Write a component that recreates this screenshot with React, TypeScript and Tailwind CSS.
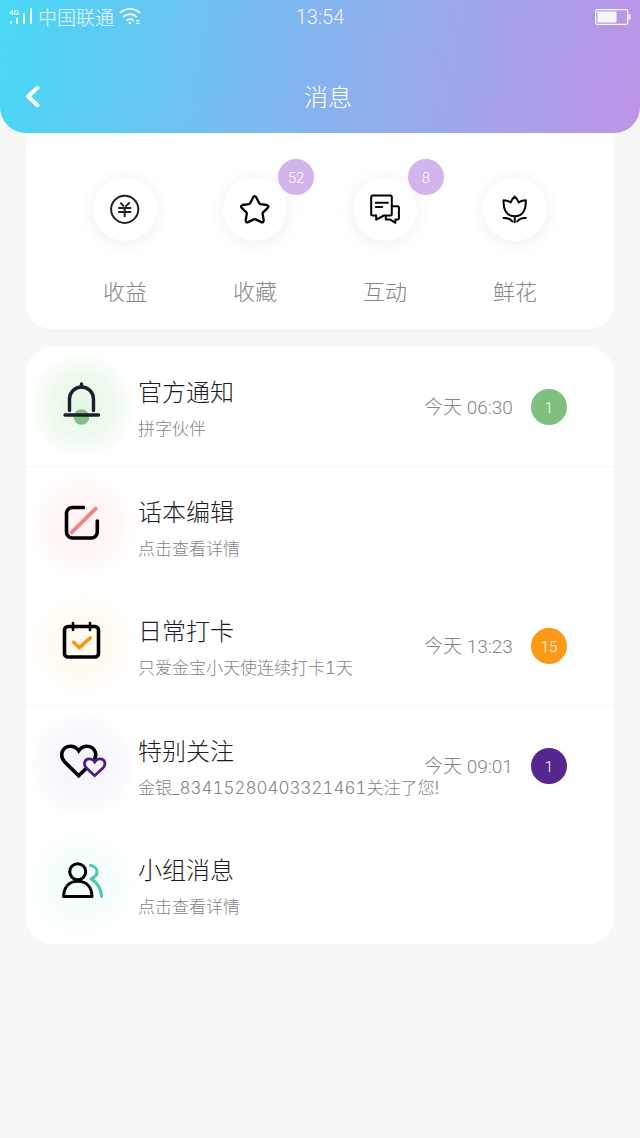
import React from 'react';

interface Shortcut {
  label: string;
  count?: number;
  icon: React.ReactNode;
}

interface Message {
  title: string;
  text: string;
  time?: string;
  count?: number;
  badge?: string;
  glow: string;
  divider?: boolean;
  icon: React.ReactNode;
}

const YenIcon = () => (
  <svg viewBox="0 0 32 32" className="size-8" fill="none" stroke="#222" strokeWidth="2">
    <circle cx="15.7" cy="16.3" r="13.6" />
    <path d="M9.2 15h13M9.2 19h13M15.7 14v10M11.4 9.6l3.4 3.8M20.8 9.4l-4.6 4.4" />
  </svg>
);

const StarIcon = () => (
  <svg viewBox="0 0 32 32" className="size-8" fill="none" stroke="#000" strokeWidth="2.3" strokeLinejoin="round">
    <path d="M14.2 4.2Q15.7 1.9 17.2 4.2L20.2 10.2Q20.7 11 21.7 11.2L27.8 12Q30.4 12.7 28.7 14.9L24.1 19.3Q23.5 20 23.6 20.8L24.7 27.2Q24.7 30.3 21.8 28.9L16.6 26.4Q15.7 26 14.8 26.4L9.6 28.9Q6.7 30.3 6.7 27.2L7.8 20.8Q7.9 20 7.3 19.3L2.7 14.9Q1 12.7 3.6 12L9.7 11.2Q10.7 11 11.2 10.2Z" />
  </svg>
);

const ChatIcon = () => (
  <svg viewBox="0 0 32 32" className="size-8" fill="none" stroke="#000" strokeWidth="2" strokeLinejoin="round" strokeLinecap="round">
    <path d="M3.5 2.5h18a1.3 1.3 0 0 1 1.3 1.3v17.4a1.3 1.3 0 0 1-1.3 1.3H15l-7.8 4.2v-4.2H3.5a1.3 1.3 0 0 1-1.3-1.3V3.8a1.3 1.3 0 0 1 1.3-1.3z" />
    <path d="M6.8 9.7h12M6.8 14h6.4" />
    <path d="M23 13.2h5.6a1.3 1.3 0 0 1 1.3 1.3v10.8a1.3 1.3 0 0 1-1.3 1.3h-2.2v3.2l-5.6-3.4h-4v-3.2" />
  </svg>
);

const FlowerIcon = () => (
  <svg viewBox="0 0 32 32" className="size-8" fill="none" stroke="#000" strokeWidth="2" strokeLinejoin="round" strokeLinecap="round">
    <path d="M15.7 3.6c-1.8 1.4-3 3.2-4 5.8-2-1.4-4.4-2.2-7-2.2-.8 8.6 2.6 16 11 16s11.8-7.4 11-16c-2.6 0-5 .8-7 2.2-1-2.6-2.2-4.4-4-5.8z" />
    <path d="M15.7 23.5v5.8M4.6 25c3.6-.3 6.6.8 8.6 3.4M26.8 25c-3.6-.3-6.6.8-8.6 3.4" />
  </svg>
);

const BellIcon = () => (
  <svg viewBox="0 0 56 56" className="size-14" fill="none" stroke="#1d1d2b" strokeWidth="3.4" strokeLinecap="round">
    <circle cx="27.5" cy="39" r="7.8" fill="#7fc183" stroke="none" />
    <path d="M15.5 32.5V21a12 12 0 0 1 24 0v11.5M27.5 9V6M11 37h33.5" />
  </svg>
);

const EditIcon = () => (
  <svg viewBox="0 0 56 56" className="size-14" fill="none" strokeLinecap="round">
    <path d="M29.5 9.5H18.500a6 6 0 0 0-6 6v18.500a6 6 0 0 0 6 6h18.800a6 6 0 0 0 6-6v-11" stroke="#000" strokeWidth="3.6" />
    <path d="M17.8 34.3L41.6 10.6" stroke="#ef858b" strokeWidth="4" />
  </svg>
);

const CalendarIcon = () => (
  <svg viewBox="0 0 56 56" className="size-14" fill="none" strokeLinecap="round" strokeLinejoin="round">
    <rect x="10.5" y="9.5" width="34" height="30.5" rx="3.5" stroke="#000" strokeWidth="3.6" />
    <path d="M19 6v7M36 6v7" stroke="#000" strokeWidth="2.6" />
    <path d="M19.6 25.2l5.8 5.4 10.8-9.8" stroke="#f7981d" strokeWidth="3.6" />
  </svg>
);

const HeartsIcon = () => (
  <svg viewBox="0 0 56 56" className="size-14" strokeLinejoin="miter">
    <path d="M24.7 38.8L11 25.2C4.5 18.5 8.5 9.3 16.5 9.3c3.500 0 6.200 1.700 8.200 4.500 2-2.800 4.700-4.500 8.200-4.500 8 0 12 9.200 5.500 15.900z" fill="none" stroke="#000" strokeWidth="3.6" />
    <path d="M40.700 38.700l-8.200-7.600c-4-4.200-1.600-9.200 2.800-9.200 2.400 0 4.200 1.200 5.400 3 1.200-1.800 3-3 5.400-3 4.400 0 6.800 5 2.800 9.200z" fill="#faf8fe" stroke="#4b1a8e" strokeWidth="2.8" />
  </svg>
);

const GroupIcon = () => (
  <svg viewBox="0 0 56 56" className="size-14" fill="none" strokeWidth="3" strokeLinejoin="round" strokeLinecap="round">
    <path d="M36.5 9.6c4 .4 6.500 3 6.500 6.500s-2.400 5.400-6 6.800c6.400 3.800 10.200 9.600 10.600 17.400" stroke="#4bc8ad" />
    <circle cx="23.7" cy="15.7" r="8" stroke="#000" />
    <path d="M9.6 40.5C10 31 15.2 25.2 23.8 25.2S37.6 31 38 40.5z" stroke="#000" />
  </svg>
);

const shortcuts: Shortcut[] = [
  { label: '收益', icon: <YenIcon /> },
  { label: '收藏', count: 52, icon: <StarIcon /> },
  { label: '互动', count: 8, icon: <ChatIcon /> },
  { label: '鲜花', icon: <FlowerIcon /> },
];

const messages: Message[] = [
  {
    title: '官方通知', text: '拼字伙伴', time: '今天 06:30', count: 1, divider: true,
    badge: 'bg-[#7fbf80]',
    glow: 'bg-[radial-gradient(closest-side,#e4f6e4,#eefaee_55%,#f8fdf8_85%,#ffffff)]',
    icon: <BellIcon />,
  },
  {
    title: '话本编辑', text: '点击查看详情',
    glow: 'bg-[radial-gradient(closest-side,#fff2f0,#fff7f6_55%,#fffcfc_85%,#ffffff)]',
    icon: <EditIcon />,
  },
  {
    title: '日常打卡', text: '只爱金宝小天使连续打卡1天', time: '今天 13:23', count: 15, divider: true,
    badge: 'bg-[#fc9a18]',
    glow: 'bg-[radial-gradient(closest-side,#fffaed,#fffcf2_55%,#fffefa_85%,#ffffff)]',
    icon: <CalendarIcon />,
  },
  {
    title: '特别关注', text: '金银_83415280403321461关注了您!', time: '今天 09:01', count: 1,
    badge: 'bg-[#56288f]',
    glow: 'bg-[radial-gradient(closest-side,#f7f4fc,#f9f8fd_55%,#fcfcfe_85%,#ffffff)]',
    icon: <HeartsIcon />,
  },
  {
    title: '小组消息', text: '点击查看详情',
    glow: 'bg-[radial-gradient(closest-side,#effdf9,#f6fefb_55%,#fbfffd_85%,#ffffff)]',
    icon: <GroupIcon />,
  },
];

const StatusBar = () => (
  <div className="grid h-[34px] grid-cols-3 items-center px-[9px] text-[19px] text-white/90">
    <div className="flex items-center gap-[5px] whitespace-nowrap">
      <svg viewBox="0 0 24 20" className="h-5 w-6 shrink-0 overflow-visible" fill="currentColor">
        <text x="0" y="8" fontSize="8" fontWeight="500">4G</text>
        <rect x="1" y="14" width="2" height="3" />
        <rect x="7" y="11" width="2" height="6" />
        <rect x="14" y="6" width="2" height="11" />
        <rect x="21" y="1" width="2" height="16" />
      </svg>
      <span className="pt-1 leading-7">中国联通</span>
      <svg viewBox="0 0 22 18" className="h-[18px] w-[22px] shrink-0" fill="none" stroke="currentColor" strokeWidth="1.7">
        <path d="M.8 5c6-5.6 14.4-5.6 20.4 0M4 9c4.2-3.9 9.8-3.9 14 0M7.2 12.6c2.4-2 5.2-2 7.6 0" />
        <circle cx="10.8" cy="15" r="1.3" fill="currentColor" stroke="none" />
        <path d="M17 12.6h3.5M17 15.3h3.5" strokeWidth="1.2" />
      </svg>
    </div>
    <div className="text-center text-[20px]">13:54</div>
    <svg viewBox="0 0 36 16" className="h-4 w-9 justify-self-end" fill="none" stroke="currentColor">
      <rect x=".7" y=".7" width="32" height="14.6" rx="1.5" strokeWidth="1.3" />
      <rect x="2.5" y="2.5" width="19" height="11" fill="currentColor" stroke="none" />
      <rect x="33.5" y="5.5" width="2" height="5" fill="currentColor" stroke="none" />
    </svg>
  </div>
);

const MessageRow: React.FC<{ message: Message }> = ({ message }) => (
  <li className={message.divider ? 'border-b border-[#f7f7f7]' : ''}>
    <button type="button" className="flex h-[119px] w-full items-center text-left">
      <span className={`mb-px ml-[2px] flex size-[108px] shrink-0 items-center justify-center rounded-full ${message.glow}`}>
        {message.icon}
      </span>
      <span className="mt-[9px] ml-[2px] min-w-0 flex-1 whitespace-nowrap">
        <span className="block text-[24px] leading-9 text-[#1c1c24]">{message.title}</span>
        <span className="block font-['Inter','Noto_Sans_CJK_SC',sans-serif] text-[17px] leading-9 text-[#858585] tabular-nums">{message.text}</span>
      </span>
      {message.time && (
        <>
          <span className="w-[90px] shrink-0 pt-1 text-[19px] whitespace-nowrap text-[#858585]">{message.time}</span>
          <span className={`mr-[47px] ml-[17px] flex size-9 shrink-0 items-center justify-center rounded-full pt-[3px] text-[15px] text-white ${message.badge}`}>
            {message.count}
          </span>
        </>
      )}
    </button>
  </li>
);

export default function App() {
  return (
    <div className="min-h-screen bg-[#f7f7f7] font-['Roboto','Noto_Sans_CJK_SC',sans-serif] font-light">
      <header className="rounded-b-[26px] bg-[linear-gradient(100deg,#47d8f5,#86b3ef_50%,#be94e7)]">
        <StatusBar />
        <nav className="flex h-[99px] items-center pt-[26px] text-white">
          <button type="button" aria-label="返回" className="flex w-16 shrink-0 pl-6">
            <svg viewBox="0 0 18 26" className="h-[26px] w-[18px]" fill="none" stroke="currentColor" strokeWidth="4" strokeLinecap="round" strokeLinejoin="round">
              <path d="M13.5 3.8L4 12.5l9.5 8.7" />
            </svg>
          </button>
          <h1 className="flex-1 pt-[3px] pr-12 text-center text-[24px] leading-9">消息</h1>
        </nav>
      </header>

      <main className="px-[26px]">
        <section className="grid grid-cols-4 rounded-b-[26px] bg-white px-[34px] pt-11 pb-5">
          {shortcuts.map(item => (
            <button key={item.label} type="button" className="flex flex-col items-center">
              <span className="relative flex size-16 items-center justify-center rounded-full bg-white shadow-[0_2px_18px_rgba(0,0,0,0.07)]">
                {item.icon}
                {item.count !== undefined && (
                  <span className="absolute -top-[18px] -right-[27px] flex size-9 items-center justify-center rounded-full bg-[#d1b5ec] pt-[2px] text-[15px] text-white">
                    {item.count}
                  </span>
                )}
              </span>
              <span className="mt-9 text-[22px] leading-8 text-[#858585]">{item.label}</span>
            </button>
          ))}
        </section>

        <ul className="mt-[18px] overflow-hidden rounded-[26px] bg-white">
          {messages.map(message => (
            <MessageRow key={message.title} message={message} />
          ))}
        </ul>
      </main>
    </div>
  );
}
